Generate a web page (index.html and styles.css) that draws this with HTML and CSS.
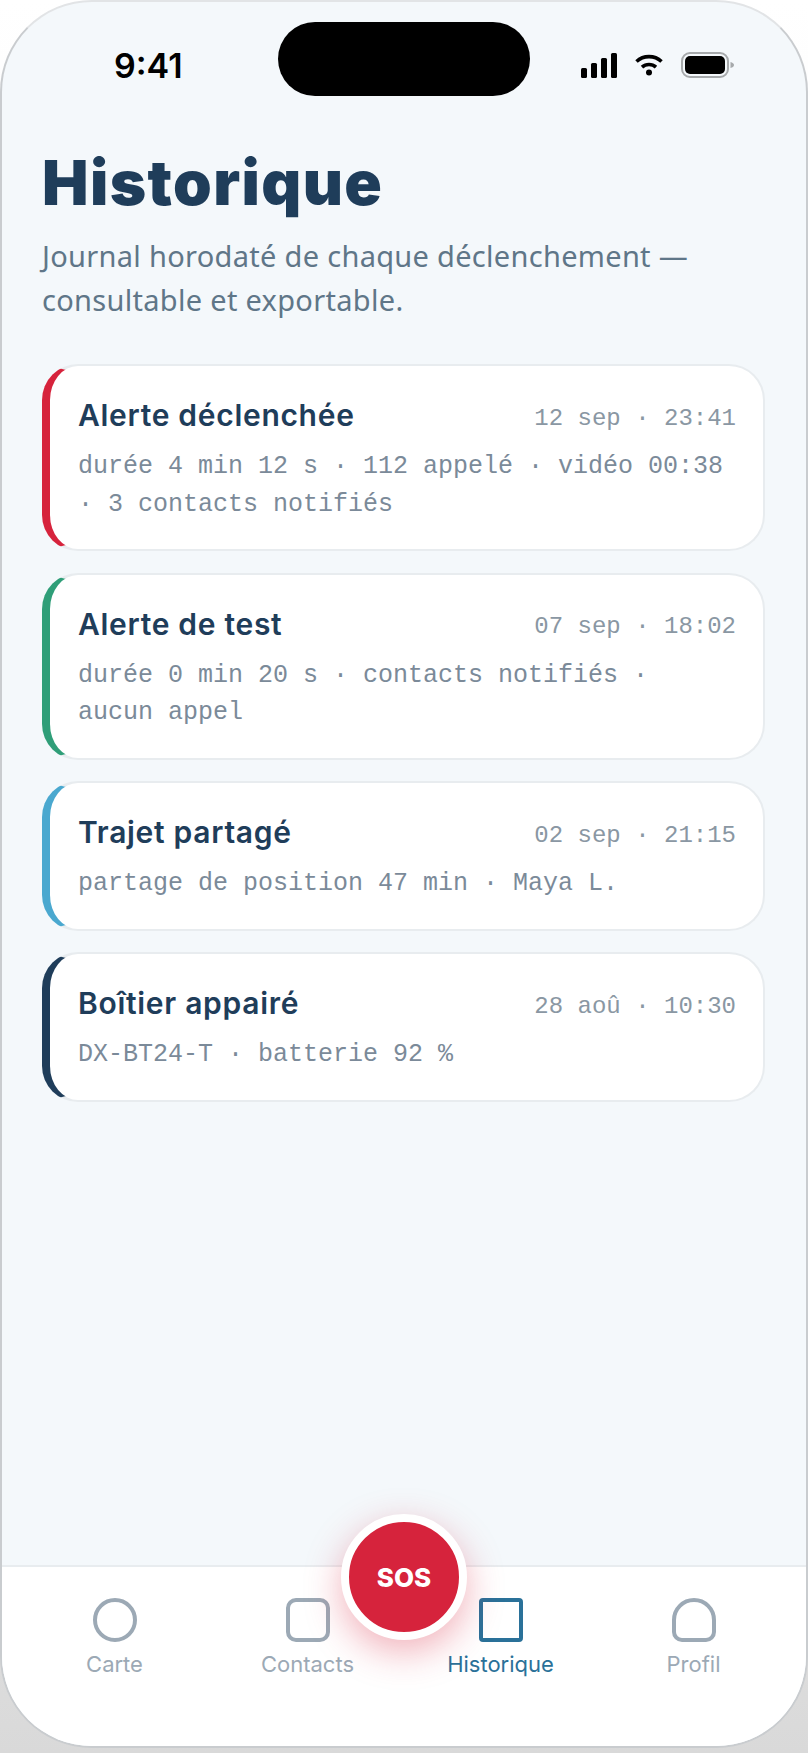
FILE: index.html
```html
<!DOCTYPE html>
<html lang="fr">
<head>
  <meta charset="UTF-8">
  <meta name="viewport" content="width=device-width, initial-scale=1.0">
  <title>Historique</title>
  <link rel="stylesheet" href="styles.css">
</head>
<body>
  <div class="phone">
    <div class="status">
      <div class="time">9:41</div>
      <div class="island"></div>
      <div class="status-icons">
        <svg class="signal" width="36" height="25" viewBox="0 0 36 25" fill="#000">
          <rect x="0" y="15" width="6" height="10" rx="1.5"/>
          <rect x="10" y="10" width="6" height="15" rx="1.5"/>
          <rect x="20" y="5" width="6" height="20" rx="1.5"/>
          <rect x="30" y="0" width="6" height="25" rx="1.5"/>
        </svg>
        <svg class="wifi" width="28" height="22" viewBox="0 0 28 22" fill="none" stroke="#000" stroke-width="3.6">
          <path d="M1.500 7.500C8.500 1 19.500 1 26.500 7.500"/>
          <path d="M7 13.200C11 9.600 17 9.600 21 13.200"/>
          <circle cx="14" cy="18.500" r="3" fill="#000" stroke="none"/>
        </svg>
        <svg class="battery" width="54" height="26" viewBox="0 0 54 26">
          <rect x="1" y="1" width="46" height="24" rx="8" fill="none" stroke="#a6a9ab" stroke-width="2"/>
          <rect x="4" y="4" width="40" height="18" rx="5" fill="#000"/>
          <path d="M49.500 10c2 .5 3.500 1.500 3.500 3s-1.500 2.500-3.500 3z" fill="#a6a9ab"/>
        </svg>
      </div>
    </div>

    <main class="content">
      <h1>Historique</h1>
      <p class="lead">Journal horodaté de chaque déclenchement —<br>consultable et exportable.</p>

      <div class="events">
        <div class="event event-red">
          <div class="event-head">
            <span class="event-title">Alerte déclenchée</span>
            <span class="event-date">12 sep · 23:41</span>
          </div>
          <div class="event-desc">durée 4 min 12 s · 112 appelé · vidéo 00:38 · 3 contacts notifiés</div>
        </div>
        <div class="event event-green">
          <div class="event-head">
            <span class="event-title">Alerte de test</span>
            <span class="event-date">07 sep · 18:02</span>
          </div>
          <div class="event-desc">durée 0 min 20 s · contacts notifiés · aucun appel</div>
        </div>
        <div class="event event-blue">
          <div class="event-head">
            <span class="event-title">Trajet partagé</span>
            <span class="event-date">02 sep · 21:15</span>
          </div>
          <div class="event-desc">partage de position 47 min · Maya L.</div>
        </div>
        <div class="event event-navy">
          <div class="event-head">
            <span class="event-title">Boîtier appairé</span>
            <span class="event-date">28 aoû · 10:30</span>
          </div>
          <div class="event-desc">DX-BT24-T · batterie 92 %</div>
        </div>
      </div>
    </main>

    <nav class="tabbar">
      <div class="tab">
        <span class="tab-icon icon-circle"></span>
        <span class="tab-label">Carte</span>
      </div>
      <div class="tab">
        <span class="tab-icon icon-square"></span>
        <span class="tab-label">Contacts</span>
      </div>
      <div class="tab active">
        <span class="tab-icon icon-box"></span>
        <span class="tab-label">Historique</span>
      </div>
      <div class="tab">
        <span class="tab-icon icon-profile"></span>
        <span class="tab-label">Profil</span>
      </div>
      <button class="sos" type="button">SOS</button>
    </nav>
  </div>
</body>
</html>
```

FILE: styles.css
```css
* {
  box-sizing: border-box;
}

html {
  height: 1753px;
  overflow: hidden;
  background: linear-gradient(to bottom, #ffffff 0%, #ececec 70%, #d9d9d9 100%);
}

body {
  margin: 0;
  font-family: "Inter", "Noto Sans", sans-serif;
}

.phone {
  position: relative;
  width: 808px;
  height: 1748px;
  display: flex;
  flex-direction: column;
  background: #f4f8fb;
  border: 2px solid #c9cccf;
  border-top-color: #e2e4e6;
  border-radius: 92px;
  overflow: hidden;
}

.status {
  display: flex;
  align-items: flex-start;
  padding-top: 20px;
  flex-shrink: 0;
}

.time {
  width: 276px;
  padding-left: 112px;
  margin-top: 23px;
  font-size: 34px;
  line-height: 41px;
  font-weight: 600;
  color: #000;
}

.island {
  width: 252px;
  height: 74px;
  border-radius: 37px;
  background: #000;
}

.status-icons {
  display: flex;
  align-items: center;
  margin-top: 30px;
  margin-left: 51px;
}

.wifi {
  margin-left: 18px;
}

.battery {
  margin-left: 18px;
}

.content {
  flex: 1;
  padding: 48px 41px 0 40px;
}

h1 {
  margin: 0;
  font-size: 62px;
  line-height: 78px;
  letter-spacing: 1.4px;
  font-weight: 900;
  color: #1f3d5a;
}

.lead {
  margin: 12px 0 0;
  font-family: "Noto Sans", sans-serif;
  font-size: 29px;
  line-height: 44px;
  letter-spacing: 0.3px;
  color: #5f7688;
}

.events {
  display: flex;
  flex-direction: column;
  gap: 21.5px;
  margin-top: 42px;
}

.event {
  padding: 28px 27px 26px 28px;
  background: #fff;
  border: 2px solid #e8ecef;
  border-left: 8px solid #1f3d5a;
  border-radius: 36px;
}

.event-red {
  border-left-color: #d6233c;
}

.event-green {
  border-left-color: #2f9e78;
}

.event-blue {
  border-left-color: #4aa8cf;
}

.event-navy {
  border-left-color: #1f3d5a;
}

.event-head {
  display: flex;
  justify-content: space-between;
  align-items: center;
  margin-bottom: 12px;
}

.event-title {
  font-size: 30px;
  line-height: 42px;
  letter-spacing: 0.7px;
  font-weight: 600;
  color: #1f3d5a;
}

.event-date {
  font-family: "Liberation Mono", monospace;
  font-size: 24px;
  color: #8a97a3;
  padding-top: 6px;
}

.event-desc {
  font-family: "Liberation Mono", monospace;
  font-size: 25px;
  line-height: 37.5px;
  color: #7b8a99;
}

.tabbar {
  display: grid;
  grid-template-columns: repeat(4, 193px);
  justify-content: center;
  height: 181px;
  padding-top: 31px;
  background: #fff;
  border-top: 2px solid #e8ecef;
  flex-shrink: 0;
}

.tab {
  display: flex;
  flex-direction: column;
  align-items: center;
  gap: 9px;
}

.tab-icon {
  width: 44px;
  height: 44px;
  border: 4px solid #9ca9b5;
}

.icon-circle {
  border-radius: 50%;
}

.icon-square {
  border-radius: 10px;
}

.icon-box {
  border-radius: 4px;
}

.icon-profile {
  border-radius: 22px 22px 10px 10px;
}

.tab-label {
  font-size: 22px;
  line-height: 26px;
  font-weight: 400;
  color: #9ca9b5;
}

.active .tab-icon {
  border-color: #2a7199;
}

.active .tab-label {
  color: #2a7199;
}

.sos {
  position: absolute;
  left: 339px;
  top: 1512px;
  width: 126px;
  height: 126px;
  border: 8px solid #fff;
  border-radius: 50%;
  background: #d6233c;
  color: #fff;
  font-family: "Inter", sans-serif;
  font-size: 26px;
  font-weight: 800;
  padding: 0;
  box-shadow: 0 12px 36px rgba(214, 35, 60, 0.35);
}
```
